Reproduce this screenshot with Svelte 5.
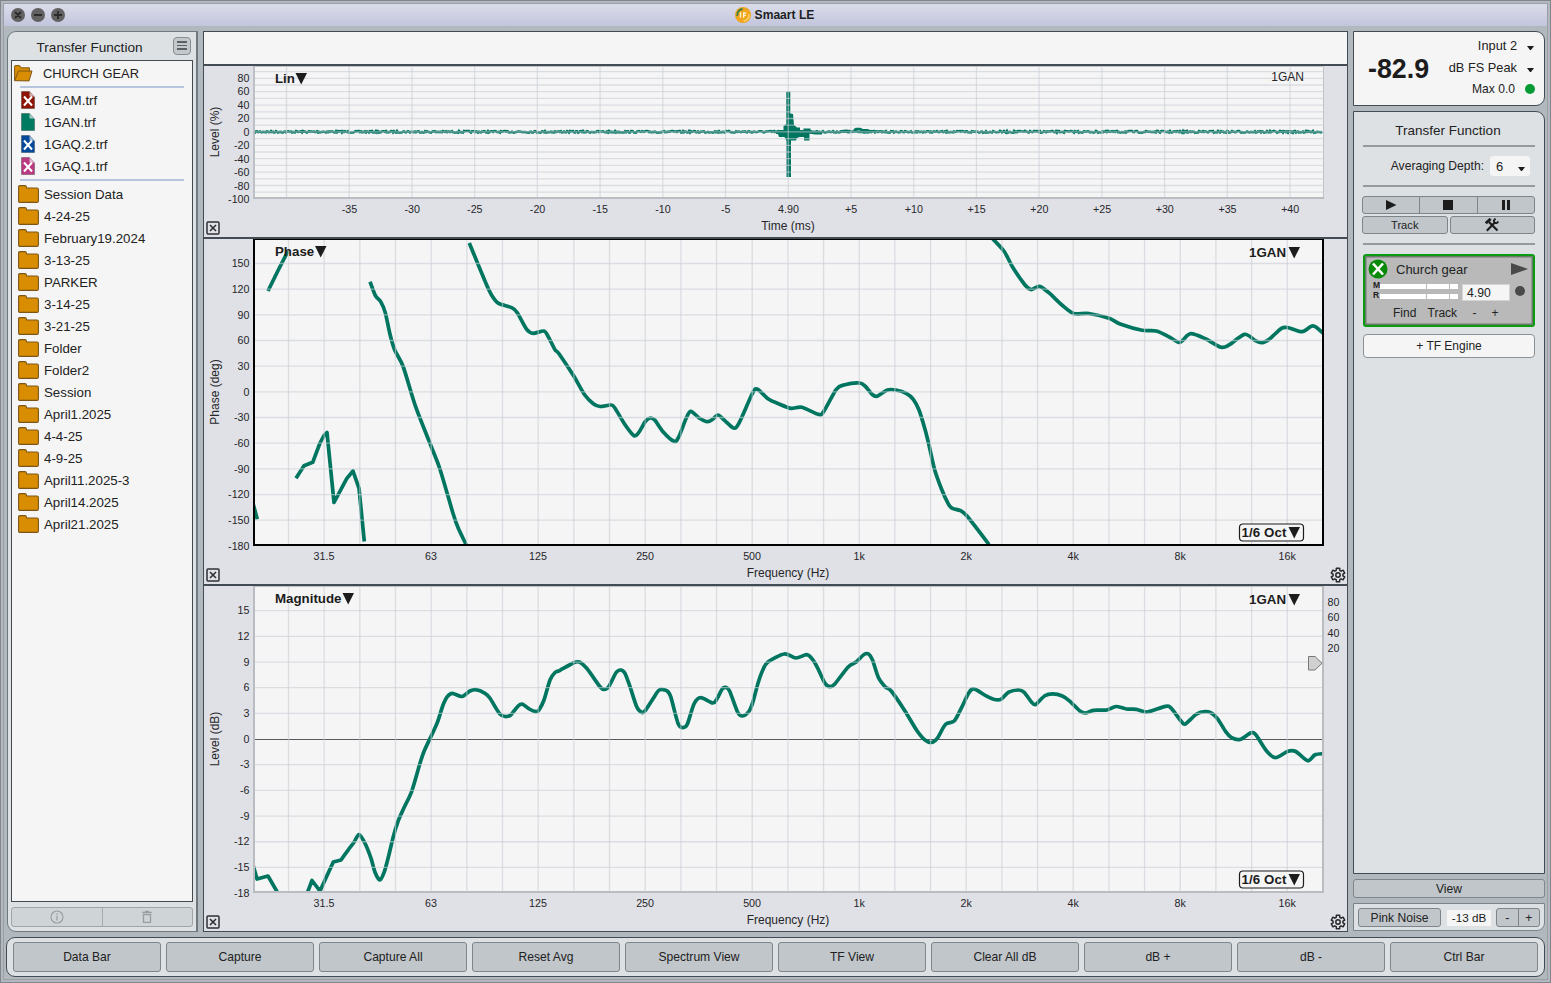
<script>
  const green = '#007560';

  const files = [
    { name: '1GAM.trf', color: '#8e1505', off: true },
    { name: '1GAN.trf', color: '#007b62', off: false },
    { name: '1GAQ.2.trf', color: '#034a9b', off: true },
    { name: '1GAQ.1.trf', color: '#b93a80', off: true }
  ];
  const folders = [
    'Session Data', '4-24-25', 'February19.2024', '3-13-25', 'PARKER', '3-14-25', '3-21-25', 'Folder',
    'Folder2', 'Session', 'April1.2025', '4-4-25', '4-9-25', 'April11.2025-3', 'April14.2025', 'April21.2025'
  ];
  const commands = ['Data Bar', 'Capture', 'Capture All', 'Reset Avg', 'Spectrum View', 'TF View', 'Clear All dB', 'dB +', 'dB -', 'Ctrl Bar'];

  // smooth path through measured points (Catmull-Rom, softened)
  function curve(p) {
    let d = `M${p[0][0]} ${p[0][1]}`;
    for (let i = 0; i < p.length - 1; i++) {
      const a = p[i - 1] ?? p[i], b = p[i], c = p[i + 1], e = p[i + 2] ?? c;
      const k = 7;
      d += `C${(b[0] + (c[0] - a[0]) / k).toFixed(1)} ${(b[1] + (c[1] - a[1]) / k).toFixed(1)} ${(c[0] - (e[0] - b[0]) / k).toFixed(1)} ${(c[1] - (e[1] - b[1]) / k).toFixed(1)} ${c[0]} ${c[1]}`;
    }
    return d;
  }
  const line = (p) => 'M' + p.map((q) => q.join(' ')).join('L');

  const phase = [
    line([[252, 500], [254, 507], [257.3, 519.3]]),
    line([[268, 291], [277.3, 272], [288, 251]]),
    line([[296, 478.3], [304, 465.7], [312.7, 462.3], [320, 443], [324, 435.5], [327, 432.5], [334, 502.5], [346.7, 478.7], [353, 471], [359, 488.3], [364.3, 541.5]]),
    curve([[370, 281.7], [375.3, 295.3], [380.7, 301.7], [385.3, 312.7], [390, 334.3], [394.7, 350], [403.3, 367], [416, 407.7], [431, 446], [440, 469.3], [453.3, 514.3], [458.3, 528.3], [466.3, 545]]),
    curve([[469.3, 243], [488.3, 288.7], [495, 300], [499.3, 303.7], [511.7, 307.7], [517.3, 312.7], [526.7, 329.3], [533.3, 333.3], [544, 331], [548.3, 336.7], [555, 349.7], [559, 353.7], [573.3, 375.3], [585, 395.3], [593.3, 403.7], [600, 406.5], [610.5, 405], [614.5, 407.5], [625.4, 425.3], [633.9, 435.7], [638.6, 432.7], [645.7, 421], [650.4, 418], [655, 420.3], [663, 431.7], [674, 441.3], [678.7, 437], [686.7, 417], [691, 411.3], [699.5, 418.3], [707.5, 421.7], [712.7, 419.3], [717.9, 415], [724.5, 420.3], [733.5, 428], [738.7, 423.7], [752.8, 392.7], [757.5, 389.3], [768.4, 399], [778, 403.5], [790.6, 408.3], [801.9, 407.3], [818.4, 414.4], [823.6, 411.7], [836.3, 389.3], [844.8, 384.7], [859.5, 383], [865, 386], [872, 394.3], [877, 396.3], [887.3, 390], [895.8, 390], [906.2, 393.3], [913.3, 399.3], [919, 410], [925, 429.3], [928.8, 444.3], [934.5, 469.3], [941.6, 489.3], [948.7, 504.7], [952.4, 508.3], [960.5, 510.7], [967, 516], [989, 544.5]]),
    curve([[991, 237], [1003.9, 251], [1012.4, 266.7], [1025, 285], [1030.8, 289.5], [1036, 287.5], [1040.7, 286.7], [1050, 293.7], [1061.9, 305], [1073.7, 313.5], [1088.8, 313.5], [1109, 318.3], [1120.9, 324.3], [1142, 330.3], [1156.3, 331], [1168, 336.3], [1178.5, 342.3], [1182.3, 340.7], [1190.8, 333.7], [1205.9, 339], [1221, 347.3], [1229.5, 344.7], [1244.6, 334.3], [1255.4, 340.7], [1262, 342.7], [1269.6, 339], [1281.4, 328.3], [1288.4, 327.7], [1302, 331.7], [1313, 325.9], [1323, 333]])
  ];

  const magnitude = [
    line([[252.5, 863], [257, 879], [268, 876], [279, 895]]),
    line([[306.5, 895], [312, 880.5], [320, 891], [325, 880], [333.3, 862], [341, 860]]) + 'L' +
      curve([[341, 860], [348.3, 849.8], [354, 842.3], [359, 834.6], [365, 843.3], [370.7, 857.3], [375.3, 873], [380, 880], [384, 872.7], [388.3, 857.3], [393.3, 836.7], [398.3, 820.7], [404, 807.7], [411.7, 791.3], [420, 763.3], [424.3, 750.7], [431.7, 735], [437.3, 722.7], [442.7, 706], [447.3, 696.7], [452.3, 693.3], [462, 696.5], [470, 691], [475.7, 689.7], [485, 693.3], [490, 698.3], [499.3, 713.3], [505, 716.5], [510.7, 715], [518.3, 705.8], [522.7, 704.3], [529.3, 709], [536, 711.7], [539, 710], [544, 700], [550, 680], [555, 672.5], [560, 670.3], [573.3, 663], [579.3, 662], [586.7, 668.3], [600, 686.7], [604.3, 689.4], [608.7, 686.7], [616, 672.8], [620.7, 670], [625, 673.3], [630, 686.7], [636.7, 706.7], [642, 712.5], [645.7, 710], [653.3, 698.3], [659.3, 690], [666.7, 690.7], [670.7, 696.7], [678, 723.3], [682.7, 727.6], [687.3, 724.3], [694, 704], [700.7, 697.7], [712.7, 703], [716.7, 699.3], [722.3, 688.9], [725.7, 687.4], [729.7, 691.2], [737.5, 712], [742.6, 716], [749.2, 711], [753, 701.7], [758, 683.3], [762.8, 670], [767.9, 662], [784.2, 654], [795.9, 658], [806.4, 654.7], [811.4, 658], [817.3, 667.3], [825, 683.3], [830, 686.7], [834.8, 684], [848.4, 666.7], [856.2, 662], [864, 654.5], [868.6, 654], [872.5, 660], [878.3, 677.3], [885.3, 687], [891.2, 691], [904.8, 710.7], [916.5, 730], [924.2, 739.3], [931.2, 742.5], [937, 738.7], [945.6, 724.3], [954.2, 721], [961.2, 708.3], [969, 692.6], [974, 688.9], [985.7, 695.7], [994.3, 699.5], [1000.9, 699.3], [1008.7, 692.2], [1018.8, 690], [1024.2, 692.3], [1031.2, 701.7], [1035.5, 704.5], [1044.8, 695.7], [1052.6, 693.9], [1062.3, 696], [1070, 701.3], [1079.9, 711], [1085.7, 713], [1093.5, 710.3], [1107, 710], [1116, 706.5], [1126.5, 709], [1136.3, 709.3], [1147.2, 712], [1165.4, 706.3], [1171.3, 708.3], [1181, 721], [1185.3, 724], [1196.6, 714], [1205.5, 711.7], [1212, 713.3], [1218, 719.3], [1225.7, 731.7], [1231.6, 737.7], [1240, 739.5], [1251, 732.9], [1256, 735], [1266.6, 751], [1275.5, 757.7], [1288, 751.2], [1295.8, 751.5], [1307.8, 760.8], [1315, 754.7], [1323, 753.7]]).slice(1)
  ];

  // noise floor of the impulse response
  let seed = 7;
  const rnd = () => ((seed = (seed * 16807) % 2147483647) / 2147483647) - 0.5;
  const floor = [];
  for (let x = 254; x < 1323; x += 1) {
    const amp = x < 780 ? 1.7 : x < 960 ? 1.4 : 1.8;
    floor.push([x, (131.8 + rnd() * amp).toFixed(1)]);
  }
  const impulseFloor = line(floor);
  const impulsePeak = 'M776 131L779 131V130L783.5 130V126L786.3 124V91.5H790.3V113.5L793 114L794 125L797 127.5L800 127.5V130.5H803.5V128.5H810.5V130.5L815 131L822 132.5V134.5H815L809.5 133.5V140.5H804V137H799.5L797 138L796 140.5H791V177H786.5V141L784.5 137L779 137L778 134H776Z';

  const impX = Array.from({ length: 17 }, (_, i) => 286.5 + i * 62.72);
  const impXLabels = ['-35', '-30', '-25', '-20', '-15', '-10', '-5', '4.90', '+5', '+10', '+15', '+20', '+25', '+30', '+35', '+40'];
  const impY = Array.from({ length: 19 }, (_, i) => 71.6 + i * 6.7);
  const impYLabels = [80, 60, 40, 20, 0, -20, -40, -60, -80, -100];

  const freqX = Array.from({ length: 29 }, (_, i) => 288.5 + i * 35.67);
  const freqLabels = ['31.5', '63', '125', '250', '500', '1k', '2k', '4k', '8k', '16k'];
  const phaseLabels = [150, 120, 90, 60, 30, 0, -30, -60, -90, -120, -150, -180];
  const magLabels = [15, 12, 9, 6, 3, 0, -3, -6, -9, -12, -15, -18];

  const gear = (() => {
    const pts = [];
    for (let i = 0; i < 6; i++) {
      const c = (i * Math.PI) / 3 - Math.PI / 2;
      for (const [o, r] of [[-0.36, 5], [-0.24, 7], [0.24, 7], [0.36, 5]]) {
        pts.push(`${(r * Math.cos(c + o)).toFixed(2)} ${(r * Math.sin(c + o)).toFixed(2)}`);
      }
    }
    return 'M' + pts.join('L') + 'Z';
  })();
</script>

{#snippet closeBox(y)}
  <g transform="translate(213 {y})" fill="none" stroke="#2c3036">
    <rect x="-6" y="-6" width="12" height="12" rx="1" stroke-width="1.5" />
    <path d="M-3 -3L3 3M3 -3L-3 3" stroke-width="1.6" />
  </g>
{/snippet}

{#snippet cog(y)}
  <g transform="translate(1338 {y})" fill="none" stroke="#26292c" stroke-width="1.5" stroke-linejoin="round">
    <path d={gear} /><circle r="2.2" />
  </g>
{/snippet}

{#snippet octave(y)}
  <rect x="1239.5" y={y - 8.5} width="64" height="17" rx="3.5" fill="#f5f5f5" stroke="#1c1c1c" stroke-width="1.2" />
  <text class="label" x="1241.5" y={y + 4.5} textLength="45">1/6 Oct</text>
  <path d="M1288.5 {y - 5.5}h11.5l-5.75 11.5z" fill="#1c1c1c" />
{/snippet}

{#snippet folderIcon()}
  <svg class="folder" width="21" height="18" viewBox="0 0 21 18">
    <path d="M.6 2Q.6.6 2 .6H7Q8.2.6 8.4 2L8.7 3H19Q20.4 3 20.4 4.4V16Q20.4 17.4 19 17.4H2Q.6 17.4.6 16Z" fill="#d98d03" stroke="#7d5617" stroke-width="1.1" />
  </svg>
{/snippet}

<div class="window">
  <header>
    <svg class="lights" width="56" height="16" viewBox="0 0 56 16">
      <g fill="#626262"><circle cx="8" cy="8" r="7" /><circle cx="28" cy="8" r="7" /><circle cx="48" cy="8" r="7" /></g>
      <path d="M5 5L11 11M11 5L5 11M24 8H32M44 8H52M48 4V12" stroke="#2b2b2b" stroke-width="1.8" />
    </svg>
    <svg width="16" height="16" viewBox="0 0 16 16">
      <circle cx="8" cy="8" r="8" fill="#efa51e" />
      <path d="M2.3 9A6 6 0 0 1 7.6 2" fill="none" stroke="#3c7e45" stroke-width="1.8" />
      <path d="M8.5 14A6 6 0 0 0 14 7" fill="none" stroke="#ffd461" stroke-width="1.4" />
      <path d="M5.5 5.3V10.8M8.6 10.8V6H11.2M8.6 8.3H11" fill="none" stroke="#fff3cf" stroke-width="1.3" />
    </svg>
    <b>Smaart LE</b>
  </header>

  <div class="body">
    <aside class="left">
      <div class="left-title">
        <span>Transfer Function</span>
        <button class="burger" aria-label="Menu"><i></i><i></i><i></i></button>
      </div>
      <div class="list">
        <div class="row root">
          <svg width="19" height="17" viewBox="0 0 19 17">
            <path d="M.6 15.5V1.2Q.6.6 1.2.6H5.6L7 2.8H15.4V6" fill="#d98d03" stroke="#7d5617" />
            <path d="M.7 15.7L4.4 6H18L15 15.9Z" fill="#d98d03" stroke="#7d5617" stroke-linejoin="round" />
          </svg>
          <span>CHURCH GEAR</span>
        </div>
        <hr />
        <div class="files">
          {#each files as f}
            <div class="row">
              <svg width="14" height="18" viewBox="0 0 14 18">
                <path d="M.5.5H8.5L13.5 6V17.5H.5Z" fill={f.color} stroke="#00000045" />
                <path d="M8.5.8V5.5H13.2Z" fill="#ffffffa0" />
                {#if f.off}<path d="M3 5.5L11 14.5M11 5.5L3 14.5" stroke="#fff" stroke-width="2" />{/if}
              </svg>
              <span>{f.name}</span>
            </div>
          {/each}
        </div>
        <hr />
        <div class="folders">
          {#each folders as f}
            <div class="row">{@render folderIcon()}<span>{f}</span></div>
          {/each}
        </div>
      </div>
      <div class="list-actions">
        <div>
          <svg width="14" height="14" viewBox="0 0 14 14" fill="none" stroke="#989da0"><circle cx="7" cy="7" r="6" stroke-width="1.1" /><path d="M7 6V10.5M7 3.5V5" stroke-width="1.2" /></svg>
        </div>
        <div>
          <svg width="12" height="14" viewBox="0 0 12 14" fill="none" stroke="#989da0" stroke-width="1.3"><path d="M1.2 2.5H10.8M4 1.4H8M2.5 4.6V12.3H9.5V4.6Z" /></svg>
        </div>
      </div>
    </aside>

    <main>
      <div class="blank"></div>

      <svg class="pane impulse" width="1143" height="171" viewBox="204 66 1143 171">
        <rect x="254" y="66" width="1070" height="132" fill="#f5f5f5" />
        <path d={impulseFloor} fill="none" stroke={green} stroke-width="2.5" />
        <path d={impulsePeak} fill={green} />
        <path d="M840 131.5l6-.8l6 .8M854 130.5l2-1.5h4l2 1l5 .4l4 1" fill="none" stroke={green} stroke-width="2.6" />
        <g class="grid">
          {#each impX as x}<path d="M{x} 66V198" />{/each}
          {#each impY as y}<path d="M254 {y}H1323" />{/each}
        </g>
        <path d="M253 66.5H1323.5V198" fill="none" stroke="#bfc4c9" />
        <path d="M254 66V198H1324" fill="none" stroke="#b9bdc2" stroke-width="1.8" />
        {#each impYLabels as v, i}<text class="tick end" x="249.5" y={82 + i * 13.44}>{v}</text>{/each}
        {#each impXLabels as v, i}<text class="tick mid" x={349.4 + i * 62.72} y="213">{v}</text>{/each}
        <text class="axis mid" x="788" y="230">Time (ms)</text>
        <text class="axis mid" transform="translate(218.5 132) rotate(-90)">Level (%)</text>
        <text class="label" x="275" y="83">Lin</text>
        <path d="M295.5 73H307L301.2 84.5Z" fill="#1c1c1c" />
        <text class="axis end" x="1304" y="81">1GAN</text>
        {@render closeBox(228)}
      </svg>

      <svg class="pane" width="1143" height="345" viewBox="204 239 1143 345">
        <rect x="254" y="239" width="1069" height="306" fill="#f5f5f5" />
        <clipPath id="cp"><rect x="254" y="240" width="1069" height="305" /></clipPath>
        <g clip-path="url(#cp)" class="trace">
          {#each phase as d}<path {d} />{/each}
        </g>
        <g class="grid">
          {#each freqX as x}<path d="M{x} 240V544" />{/each}
          {#each phaseLabels.slice(0, 11) as v, i}<path d="M255 {263.5 + i * 25.67}H1322" />{/each}
        </g>
        <path d="M253 239.5H1324" stroke="#000" />
        <path d="M254 239V545H1323V239" fill="none" stroke="#000" stroke-width="2" />
        {#each phaseLabels as v, i}<text class="tick end" x="249.5" y={267.3 + i * 25.67}>{v}</text>{/each}
        {#each freqLabels as v, i}<text class="tick mid" x={324 + i * 107.02} y="560">{v}</text>{/each}
        <text class="axis mid" x="788" y="577">Frequency (Hz)</text>
        <text class="axis mid" transform="translate(218.5 392) rotate(-90)">Phase (deg)</text>
        <text class="label" x="275" y="256">Phase</text>
        <path d="M315 246H326.5L320.7 257.5Z" fill="#1c1c1c" />
        <text class="label end" x="1286" y="257">1GAN</text>
        <path d="M1288.5 247H1300L1294.2 258.5Z" fill="#1c1c1c" />
        {@render octave(532.5)}
        {@render closeBox(575)}
        {@render cog(575)}
      </svg>

      <svg class="pane" width="1143" height="345" viewBox="204 586 1143 345">
        <rect x="254" y="586" width="1069" height="306" fill="#f5f5f5" />
        <path d="M254 739.5H1323" stroke="#565a5d" stroke-width="1.1" />
        <clipPath id="cm"><rect x="254" y="586" width="1069" height="306" /></clipPath>
        <g clip-path="url(#cm)" class="trace">
          {#each magnitude as d}<path {d} />{/each}
        </g>
        <g class="grid">
          {#each freqX as x}<path d="M{x} 587V891" />{/each}
          {#each magLabels.slice(0, 11) as v, i}{#if v !== 0}<path d="M255 {610.7 + i * 25.67}H1322" />{/if}{/each}
        </g>
        <path d="M253 586.5H1324" stroke="#bcc1c6" />
        <path d="M254 586V892H1323V586" fill="none" stroke="#b9bdc2" stroke-width="2" />
        {#each magLabels as v, i}<text class="tick end" x="249.5" y={614.3 + i * 25.67}>{v}</text>{/each}
        {#each freqLabels as v, i}<text class="tick mid" x={324 + i * 107.02} y="907">{v}</text>{/each}
        {#each [80, 60, 40, 20] as v, i}<text class="tick" x="1327.5" y={606 + i * 15.4}>{v}</text>{/each}
        <text class="axis mid" x="788" y="924">Frequency (Hz)</text>
        <text class="axis mid" transform="translate(218.5 739) rotate(-90)">Level (dB)</text>
        <text class="label" x="275" y="603">Magnitude</text>
        <path d="M342.5 593H354L348.2 604.5Z" fill="#1c1c1c" />
        <text class="label end" x="1286" y="604">1GAN</text>
        <path d="M1288.5 594H1300L1294.2 605.5Z" fill="#1c1c1c" />
        <path d="M1308.5 656.5H1315L1322 663.3L1315 670H1308.5Z" fill="#d0d0d0" stroke="#777" />
        {@render octave(879.5)}
        {@render closeBox(922)}
        {@render cog(922)}
      </svg>
    </main>

    <aside class="right">
      <section class="meter">
        <strong>-82.9</strong>
        <div class="inputs">
          <div><span>Input 2</span><i class="caret"></i></div>
          <div><span>dB FS Peak</span><i class="caret"></i></div>
          <div class="max"><span>Max 0.0</span><i class="led"></i></div>
        </div>
      </section>

      <section class="control">
        <h2>Transfer Function</h2>
        <div class="rule"></div>
        <div class="avg">
          <span>Averaging Depth:</span>
          <div class="select"><span>6</span><i class="caret"></i></div>
        </div>
        <div class="rule"></div>
        <div class="transport">
          <div><svg width="12" height="10" viewBox="0 0 12 10"><path d="M1 0L11.5 5L1 10Z" /></svg></div>
          <div><svg width="12" height="10" viewBox="0 0 12 10"><path d="M1 0H11V10H1Z" /></svg></div>
          <div><svg width="12" height="10" viewBox="0 0 12 10"><path d="M2 0H5V10H2ZM7 0H10V10H7Z" /></svg></div>
        </div>
        <div class="tools">
          <div>Track</div>
          <div>
            <svg width="14" height="14" viewBox="0 0 14 14" fill="none" stroke="#1c1c1c">
              <path d="M4 4L12.5 12.5" stroke-width="2.2" />
              <path d="M.8 5.2L5.6 .9" stroke-width="2.8" />
              <path d="M1.8 12.8L9.8 4.6" stroke-width="2.1" />
              <path d="M10.6.8Q7.8 2.2 9.6 4.4Q11.8 6.2 13.3 3.4" stroke-width="1.9" />
            </svg>
          </div>
        </div>
        <div class="rule"></div>
        <div class="engine">
          <div class="engine-head">
            <svg width="20" height="20" viewBox="0 0 20 20"><circle cx="10" cy="10" r="9.5" fill="#098a0b" /><path d="M5 4.5L15 15.5M15 4.5L5 15.5" stroke="#fff" stroke-width="2.6" /></svg>
            <span>Church gear</span>
            <svg width="17" height="12" viewBox="0 0 17 12"><path d="M0 0L17 6L0 12Z" fill="#4a4a4a" /></svg>
          </div>
          <div class="engine-mid">
            <div class="bars">
              <div><b>M</b><i></i></div>
              <div><b>R</b><i></i></div>
            </div>
            <div class="delay">4.90</div>
            <i class="dot"></i>
          </div>
          <div class="engine-foot"><span>Find</span><span>Track</span><span>-</span><span>+</span></div>
        </div>
        <div class="add">+ TF Engine</div>
      </section>

      <div class="view">View</div>
      <section class="noise">
        <div class="pink">Pink Noise</div>
        <div class="db">-13 dB</div>
        <div class="step"><span>-</span><span>+</span></div>
      </section>
    </aside>
  </div>

  <footer>
    {#each commands as c}<div>{c}</div>{/each}
  </footer>
</div>

<style>
  :global(body) { margin: 0; }
  * { box-sizing: border-box; }
  .window {
    width: 1551px; height: 983px; padding: 3px 5px 5px 3px;
    border: 1px solid #80868b; background: #b1b9be;
    box-shadow: inset 0 0 0 2px #b3b8c0, inset 0 0 0 3px #999fa4;
    font: 12.1px "Liberation Sans", Arial, sans-serif; color: #222;
    display: flex; flex-direction: column; overflow: hidden;
  }
  header {
    position: relative; height: 22px; margin-right: -2px; flex: none;
    background: linear-gradient(#dbdcea, #c2c5dc);
    display: flex; align-items: center; justify-content: center; gap: 4px;
    padding-right: 2px; font-size: 12.1px; color: #1e1e22;
  }
  .lights { position: absolute; left: 6px; top: 3px; }
  .body { display: flex; margin: 5px 0 0 3px; height: 901px; flex: none; }
  svg { display: block; flex: none; }

  .left {
    width: 191px; height: 901px; margin-right: 5px; padding: 0 3px 4px;
    border: 1.5px solid #6f797f; border-right-width: 2px; border-radius: 9px 0 0 9px; background: #dde1e4;
    display: flex; flex-direction: column; flex: none;
  }
  .left-title { height: 28px; display: flex; align-items: center; justify-content: space-between; padding: 3px 2px 0 25.5px; font-size: 13.6px; flex: none; }
  .burger { width: 18px; height: 18px; margin-top: -4px; padding: 0 3px; border: 1.5px solid #868d91; border-radius: 4px; background: #c2c8cb; display: flex; flex-direction: column; justify-content: center; gap: 2px; }
  .burger i { height: 1.5px; background: #5b6164; }
  .list { height: 842px; border: 1px solid #434b50; background: #f5f5f5; font-size: 13.3px; flex: none; }
  .row { height: 22px; display: flex; align-items: center; }
  .row span { padding-top: 1px; }
  .root { height: 25px; padding: 0 0 1px 2px; gap: 10px; font-size: 12.9px; }
  .root span { padding-top: 1px; }
  hr { height: 2px; border: 0; margin: 0 8px; background: #b6c5dd; }
  .files { padding: 1px 0 2px 9px; }
  .files .row { gap: 9px; }
  .files .row span { padding-top: 0; }
  .folders { padding: 2px 0 0 6px; }
  .folders .row { gap: 5px; }
  .folders .row span { padding-top: 0; }
  .list-actions { margin-top: 5px; height: 20px; border: 1px solid #9ea5a9; border-radius: 3px; background: #cfd4d7; display: flex; }
  .list-actions div { flex: 1; display: flex; align-items: center; justify-content: center; }
  .list-actions div + div { border-left: 1.5px solid #a5abaf; }

  main { width: 1145px; height: 901px; border: 1px solid #434c54; background: #e0e1e6; flex: none; }
  .blank { height: 34px; background: #f5f5f5; border-bottom: 2px solid #434c54; }
  .pane + .pane { border-top: 2px solid #434c54; height: 347px; }
  .grid { fill: none; stroke: #c9cdd5; stroke-opacity: 0.6; stroke-width: 1.3; }
  .trace { fill: none; stroke: #007560; stroke-width: 3.7; stroke-linejoin: round; }
  text { fill: #26262a; }
  .tick { font-size: 10.7px; }
  .axis { font-size: 12px; }
  .label { font-size: 13.3px; font-weight: bold; fill: #1c1c1c; }
  .end { text-anchor: end; }
  .mid { text-anchor: middle; }

  .right { width: 192px; margin-left: 5px; display: flex; flex-direction: column; gap: 5px; flex: none; }
  .meter { height: 75px; border: 1px solid #434c54; border-radius: 0 9px 9px 0; background: #f5f5f5; display: flex; align-items: center; padding: 0 9px 0 14px; justify-content: space-between; flex: none; }
  .meter strong { font-size: 26.8px; color: #1c1c1c; padding-top: 1px; }
  .inputs { font-size: 12.8px; margin-bottom: 3px; }
  .inputs div { height: 22px; display: flex; justify-content: flex-end; align-items: center; gap: 10px; padding-right: 1px; }
  .inputs .max { font-size: 12.1px; padding-right: 0; }
  .caret { width: 7px; height: 0; border: 3.5px solid transparent; border-top: 4px solid #1c1c1c; border-bottom: 0; margin-top: 6px; }
  .led { width: 10px; height: 10px; border-radius: 50%; background: #069a35; }
  .control { height: 763px; border: 1px solid #434c54; border-radius: 0 9px 0 0; background: #dde1e4; padding: 0 9px; flex: none; }
  h2 { margin: 0; height: 33px; padding: 11px 2px 0 0; font: 13.5px "Liberation Sans", Arial, sans-serif; text-align: center; }
  .rule { height: 2px; background: #949a9e; }
  .avg { height: 38px; display: flex; align-items: center; justify-content: flex-end; gap: 6px; padding-right: 5px; }
  .select { width: 40px; height: 20px; border-radius: 3px; background: #f5f5f5; display: flex; align-items: center; justify-content: space-between; padding: 0 5px 0 6px; font-size: 13px; }
  .transport { margin: 9px -1px 0; height: 18px; border: 1.5px solid #7e858a; border-radius: 3px; background: #c0c6ca; display: flex; width: 173px; fill: #1c1c1c; }
  .transport div { flex: 1; display: flex; align-items: center; justify-content: center; }
  .transport div + div { border-left: 1.5px solid #7e858a; }
  .tools { margin: 2px -1px 9px; width: 173px; display: flex; gap: 2px; }
  .tools div { flex: 1; height: 18px; border: 1.5px solid #7e858a; border-radius: 3px; background: #c0c6ca; display: flex; align-items: center; justify-content: center; font-size: 11.2px; }
  .engine { margin-top: 9px; width: 172px; height: 73px; border: 2.5px solid #0a9c10; border-radius: 3px; background: #b9b9b9; box-shadow: inset 0 0 0 1.5px #6c7a6c; padding: 3px 5px 0 3px; }
  .engine-head { height: 20px; display: flex; align-items: center; font-size: 13px; }
  .engine-head span { flex: 1; padding-left: 8px; }
  .engine-mid { height: 20px; display: flex; align-items: center; padding-right: 3px; margin-top: 1px; }
  .bars { width: 90px; padding-left: 5px; margin-top: 3px; }
  .bars div { height: 10px; display: flex; align-items: center; }
  .bars b { width: 7px; font-size: 8.5px; line-height: 9px; margin-top: -2px; }
  .bars i { width: 78px; height: 5px; background: linear-gradient(90deg, #fff 0 46px, #b9b9b9 46px 47px, #fff 47px 69px, #b9b9b9 69px 70px, #fff 70px); }
  .delay { width: 48px; height: 17px; margin-left: 4px; border: 1px solid #d5d5d5; background: #f5f5f5; font-size: 12.2px; line-height: 16px; padding-left: 4px; margin-top: 4px; }
  .dot { width: 10px; height: 10px; margin: 2px 0 0 auto; border-radius: 50%; background: #4a4a4a; }
  .engine-foot { display: flex; padding: 6px 0 0 25px; font-size: 12px; }
  .engine-foot span:nth-child(1) { width: 34.5px; }
  .engine-foot span:nth-child(2) { width: 45px; }
  .engine-foot span:nth-child(3) { width: 19px; }
  .add { margin-top: 7px; width: 172px; height: 24px; border: 1.5px solid #8b9196; border-radius: 4px; background: #f5f5f5; display: flex; align-items: center; justify-content: center; font-size: 12px; }
  .view { height: 19px; border: 1px solid #7e868b; border-radius: 3px; background: #c0c6ca; display: flex; align-items: center; justify-content: center; flex: none; }
  .noise { height: 28px; border: 1.5px solid #7b8489; border-radius: 0 0 8px 0; background: #dde1e4; display: flex; align-items: center; padding: 1px 4px 0; flex: none; }
  .pink { width: 83px; height: 19px; border: 1.5px solid #7e858a; border-radius: 3px; background: #c0c6ca; display: flex; align-items: center; justify-content: center; }
  .db { width: 44px; height: 16px; margin-left: 6px; background: #f5f5f5; display: flex; align-items: center; justify-content: center; font-size: 11.7px; }
  .step { width: 44px; height: 19px; margin-left: 5px; border: 1.5px solid #7e858a; border-radius: 3px; background: #c0c6ca; display: flex; margin-top: -1px; }
  .step span { flex: 1; display: flex; align-items: center; justify-content: center; padding-top: 1px; }
  .step span + span { border-left: 1.5px solid #7e858a; }

  footer {
    margin: 5px 0 0 2px; width: 1539px; height: 40px; flex: none; padding: 4px 6px;
    border: 1px solid #434c54; border-radius: 9px; background: #dde1e4; display: flex; gap: 5px;
  }
  footer div { width: 148px; height: 30px; border: 1.5px solid #7e868b; border-radius: 3px; background: #c0c6ca; display: flex; align-items: center; justify-content: center; flex: none; }
</style>
